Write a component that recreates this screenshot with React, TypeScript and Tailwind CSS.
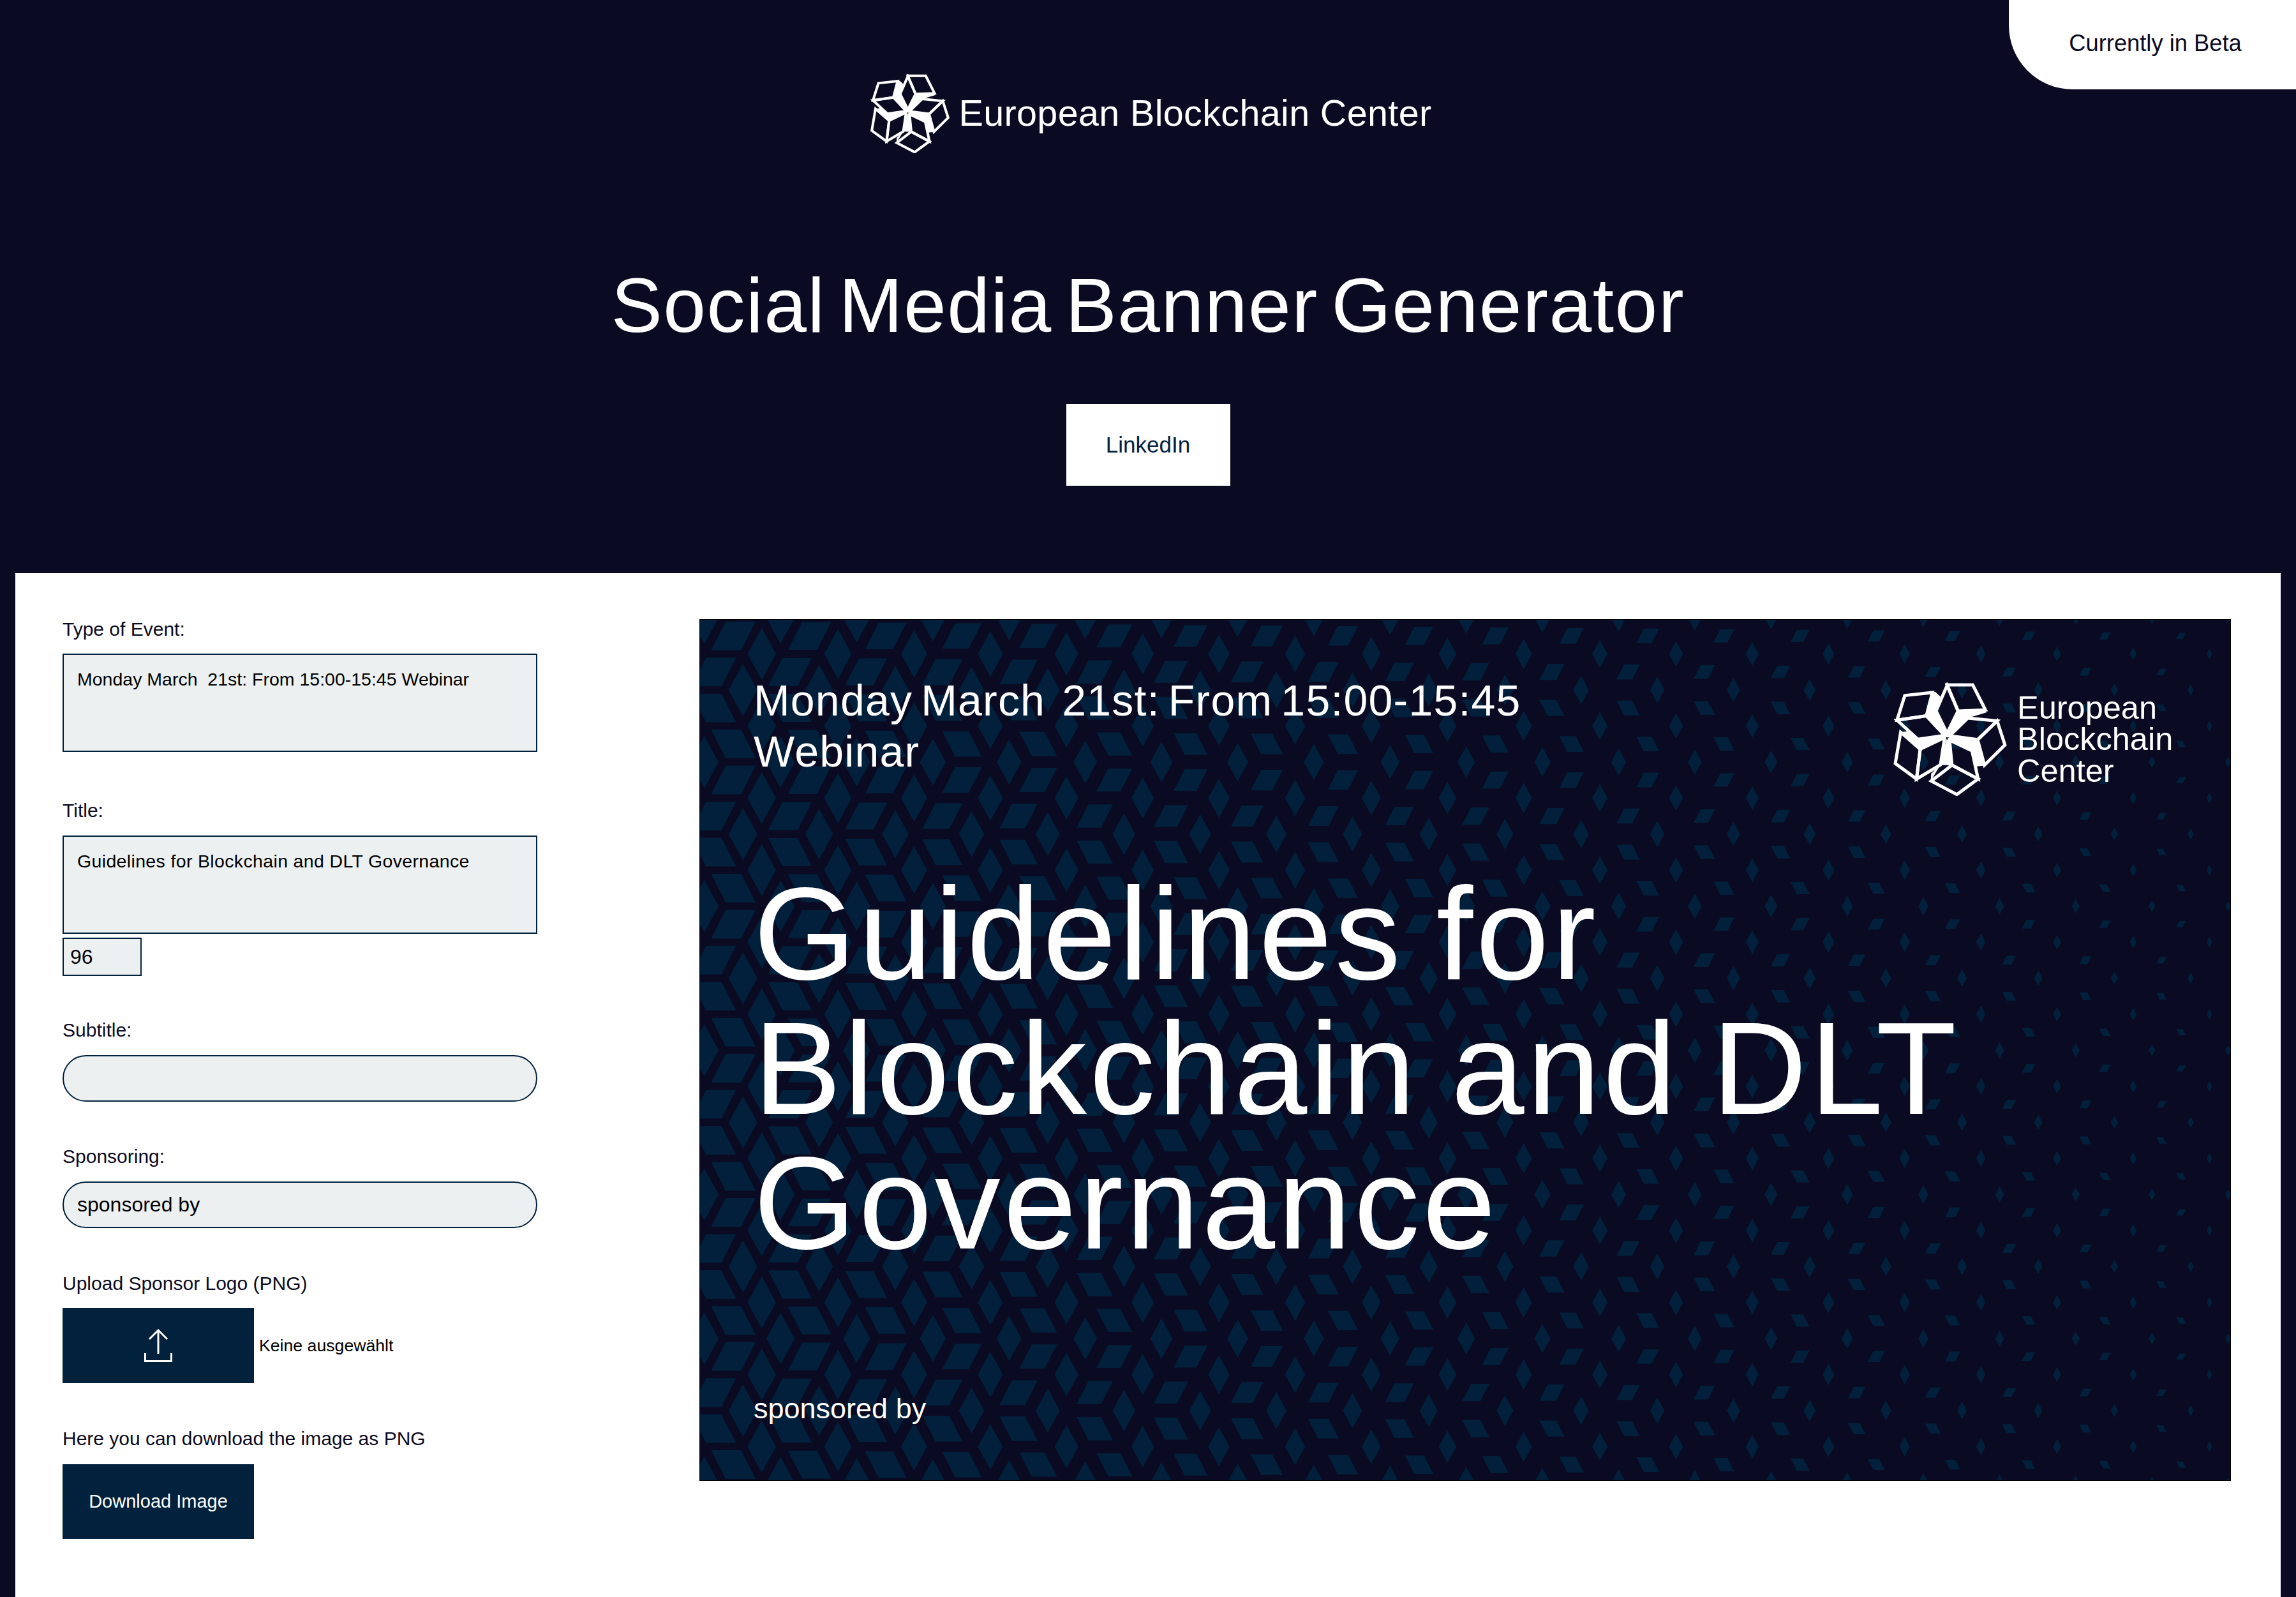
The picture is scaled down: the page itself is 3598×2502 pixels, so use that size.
import React from "react";

const W = 2400;
const H = 1350;

function buildPattern() {
  const diamonds: string[] = [];
  const paras: string[] = [];
  const px = 119.4;
  const py = 56.45;
  const scale = (x: number) => Math.max(0.2, Math.min(1, 1.03 - 0.00035 * x));
  const fmt = (pts: number[][]) => pts.map((p) => `${p[0].toFixed(1)},${p[1].toFixed(1)}`).join(" ");
  const dOff = [0, -29.4, 0, 29.4];
  const rowOff = [44.3, 44.3, 75, 75];
  const rowDir = [1, -1, -1, 1];
  for (let k = -18; k <= 10; k++) {
    const m = ((k % 4) + 4) % 4;
    const y = 956.7 + py * k;
    for (let n = -12; n <= 12; n++) {
      const x = 1290.7 + dOff[m] + px * n;
      const s = scale(x);
      const hw = 22.5 * s;
      const hh = 41 * s;
      diamonds.push(fmt([[x, y - hh], [x + hw, y], [x, y + hh], [x - hw, y]]));
      const cx = 1290.7 + rowOff[m] + px * n;
      const cy = y + py / 2;
      const t = scale(cx);
      const w = 23.5 * t;
      const h = 22.5 * t;
      const sh = 11.5 * t * rowDir[m];
      paras.push(
        fmt([
          [cx - w + sh, cy - h],
          [cx + w + sh, cy - h],
          [cx + w - sh, cy + h],
          [cx - w - sh, cy + h],
        ])
      );
    }
  }
  return [...diamonds, ...paras];
}

function Pattern() {
  const shapes = React.useMemo(buildPattern, []);
  return (
    <svg className="absolute inset-0" width={W} height={H} viewBox={`0 0 ${W} ${H}`}>
      {shapes.map((p, i) => (
        <polygon key={i} points={p} fill="#02203b" />
      ))}
    </svg>
  );
}

function Logo({ size, stroke }: { size: number; stroke: number }) {
  const faces = [
    "222,272 335,258 310,368 190,388",
    "190,388 310,368 385,460 275,478",
    "395,222 500,222 552,340 440,345",
    "395,225 350,345 395,450 440,345",
    "480,378 600,392 520,480 405,462",
    "600,392 632,505 548,600 520,480",
    "405,482 497,532 522,665 415,600",
    "415,600 522,665 435,738 330,675",
    "205,445 285,525 270,665 183,592",
    "285,525 385,470 368,598 270,665",
  ];
  const wedges = [
    "335,255 347,255 368,278 350,342 395,452 385,462 310,368",
    "440,345 552,340 556,352 480,378 402,462 395,452",
    "405,462 520,480 548,602 514,606 497,532 402,480",
    "392,478 405,482 417,602 368,598 330,640 328,675 368,598",
    "205,445 235,440 275,478 385,462 390,472 285,525",
  ];
  return (
    <svg width={size} height={size} viewBox="175 210 465 535" preserveAspectRatio="none" className="shrink-0">
      {wedges.map((p, i) => (
        <polygon key={i} points={p} fill="#ffffff" />
      ))}
      {faces.map((p, i) => (
        <polygon
          key={i}
          points={p}
          fill="none"
          stroke="#ffffff"
          strokeWidth={stroke}
          vectorEffect="non-scaling-stroke"
          strokeLinejoin="miter"
        />
      ))}
    </svg>
  );
}

function Label({ children, className = "" }: { children: React.ReactNode; className?: string }) {
  return <label className={`block h-[28px] text-[30px] leading-[28px] text-[#0a0a22] whitespace-nowrap ${className}`}>{children}</label>;
}

const areaCls =
  "block w-[744px] h-[154px] resize-none border-2 border-[#02213c] bg-[#ecf0f1] pl-[21px] pt-[21px] text-[28.5px] leading-[34px] text-black outline-none font-['Liberation_Sans',sans-serif]";
const pillCls =
  "block w-[744px] h-[73px] rounded-full border-2 border-[#02213c] bg-[#ecf0f1] pl-[21px] text-[32px] text-black outline-none font-['Liberation_Sans',sans-serif]";

export default function App() {
  return (
    <div className="relative h-[2502px] w-[3598px] overflow-hidden bg-[#0a0a22] font-['Liberation_Sans',sans-serif]">
      <div className="absolute right-0 top-0 flex h-[140px] w-[450px] items-center justify-center rounded-bl-[100px] bg-white pb-[4px] pl-[9px] text-[36.3px] text-[#0a0a22]">
        Currently in Beta
      </div>

      <header className="flex h-[898px] flex-col items-center">
        <div className="mt-[115px] flex h-[125px] items-center gap-[14px] pl-[10px] text-white">
          <Logo size={124} stroke={4} />
          <span className="text-[57.5px] leading-none tracking-[0.35px]">European Blockchain Center</span>
        </div>
        <h1 className="mt-[163px] text-[120px] font-normal leading-[150px] tracking-[1.5px] text-white [word-spacing:-14px]">
          Social Media Banner Generator
        </h1>
        <button className="mt-[80px] flex h-[128px] w-[257px] items-center justify-center bg-white text-[35px] text-[#02213c]">
          LinkedIn
        </button>
      </header>

      <main className="mx-[24px] flex h-[1604px] gap-[254px] bg-white pl-[74px]">
        <form className="w-[744px] shrink-0 pt-[74px]">
          <Label>Type of Event:</Label>
          <textarea className={`${areaCls} mt-[24px]`} defaultValue="Monday March  21st: From 15:00-15:45 Webinar" />
          <Label className="mt-[78px]">Title:</Label>
          <textarea className={`${areaCls} mt-[25px] tracking-[0.35px]`} defaultValue="Guidelines for Blockchain and DLT Governance" />
          <input
            className="mt-[6px] block h-[60px] w-[124px] border-2 border-[#02213c] bg-[#ecf0f1] pl-[10px] text-[32px] text-black outline-none"
            defaultValue="96"
          />
          <Label className="mt-[71px]">Subtitle:</Label>
          <input className={`${pillCls} mt-[25px]`} defaultValue="" />
          <Label className="mt-[72px]">Sponsoring:</Label>
          <input className={`${pillCls} mt-[25px]`} defaultValue="sponsored by" />
          <Label className="mt-[73px]">Upload Sponsor Logo (PNG)</Label>
          <div className="mt-[24px] flex items-center gap-[8px]">
            <button type="button" className="flex h-[118px] w-[300px] items-center justify-center bg-[#02213c]">
              <svg width="44" height="52" viewBox="0 0 44 52" fill="none" stroke="#ffffff" strokeWidth="3">
                <path d="M22 2V39" />
                <path d="M8 16L22 2L36 16" />
                <path d="M1.5 38V50.5H42.5V38" />
              </svg>
            </button>
            <span className="text-[26.67px] text-black">Keine ausgewählt</span>
          </div>
          <Label className="mt-[73px]">Here you can download the image as PNG</Label>
          <button type="button" className="mt-[26px] flex h-[117px] w-[300px] items-center justify-center bg-[#02213c] text-[29px] text-white">
            Download Image
          </button>
        </form>

        <section className="relative mt-[72px] h-[1350px] w-[2400px] shrink-0 overflow-hidden border border-black bg-[#0a0a22] text-white">
          <Pattern />
          <div className="absolute right-[89px] top-[98px] flex items-center gap-[16px]">
            <Logo size={178} stroke={5} />
            <div className="w-[245px] text-[50.5px] leading-[49.5px]">European Blockchain Center</div>
          </div>
          <div className="relative flex h-full flex-col pl-[84px] pt-[86px]">
            <div className="w-[1300px] whitespace-pre-wrap text-[68px] leading-[80px] tracking-[1.2px] [word-spacing:-7px]">
              Monday March  21st: From 15:00-15:45 Webinar
            </div>
            <div className="mt-[141px] w-[1950px] text-[206px] leading-[211px] tracking-[4.5px] [word-spacing:-10px]">
              Guidelines for Blockchain and DLT Governance
            </div>
            <div className="mt-[192px] text-[45px] leading-[48px]">sponsored by</div>
          </div>
        </section>
      </main>
    </div>
  );
}
